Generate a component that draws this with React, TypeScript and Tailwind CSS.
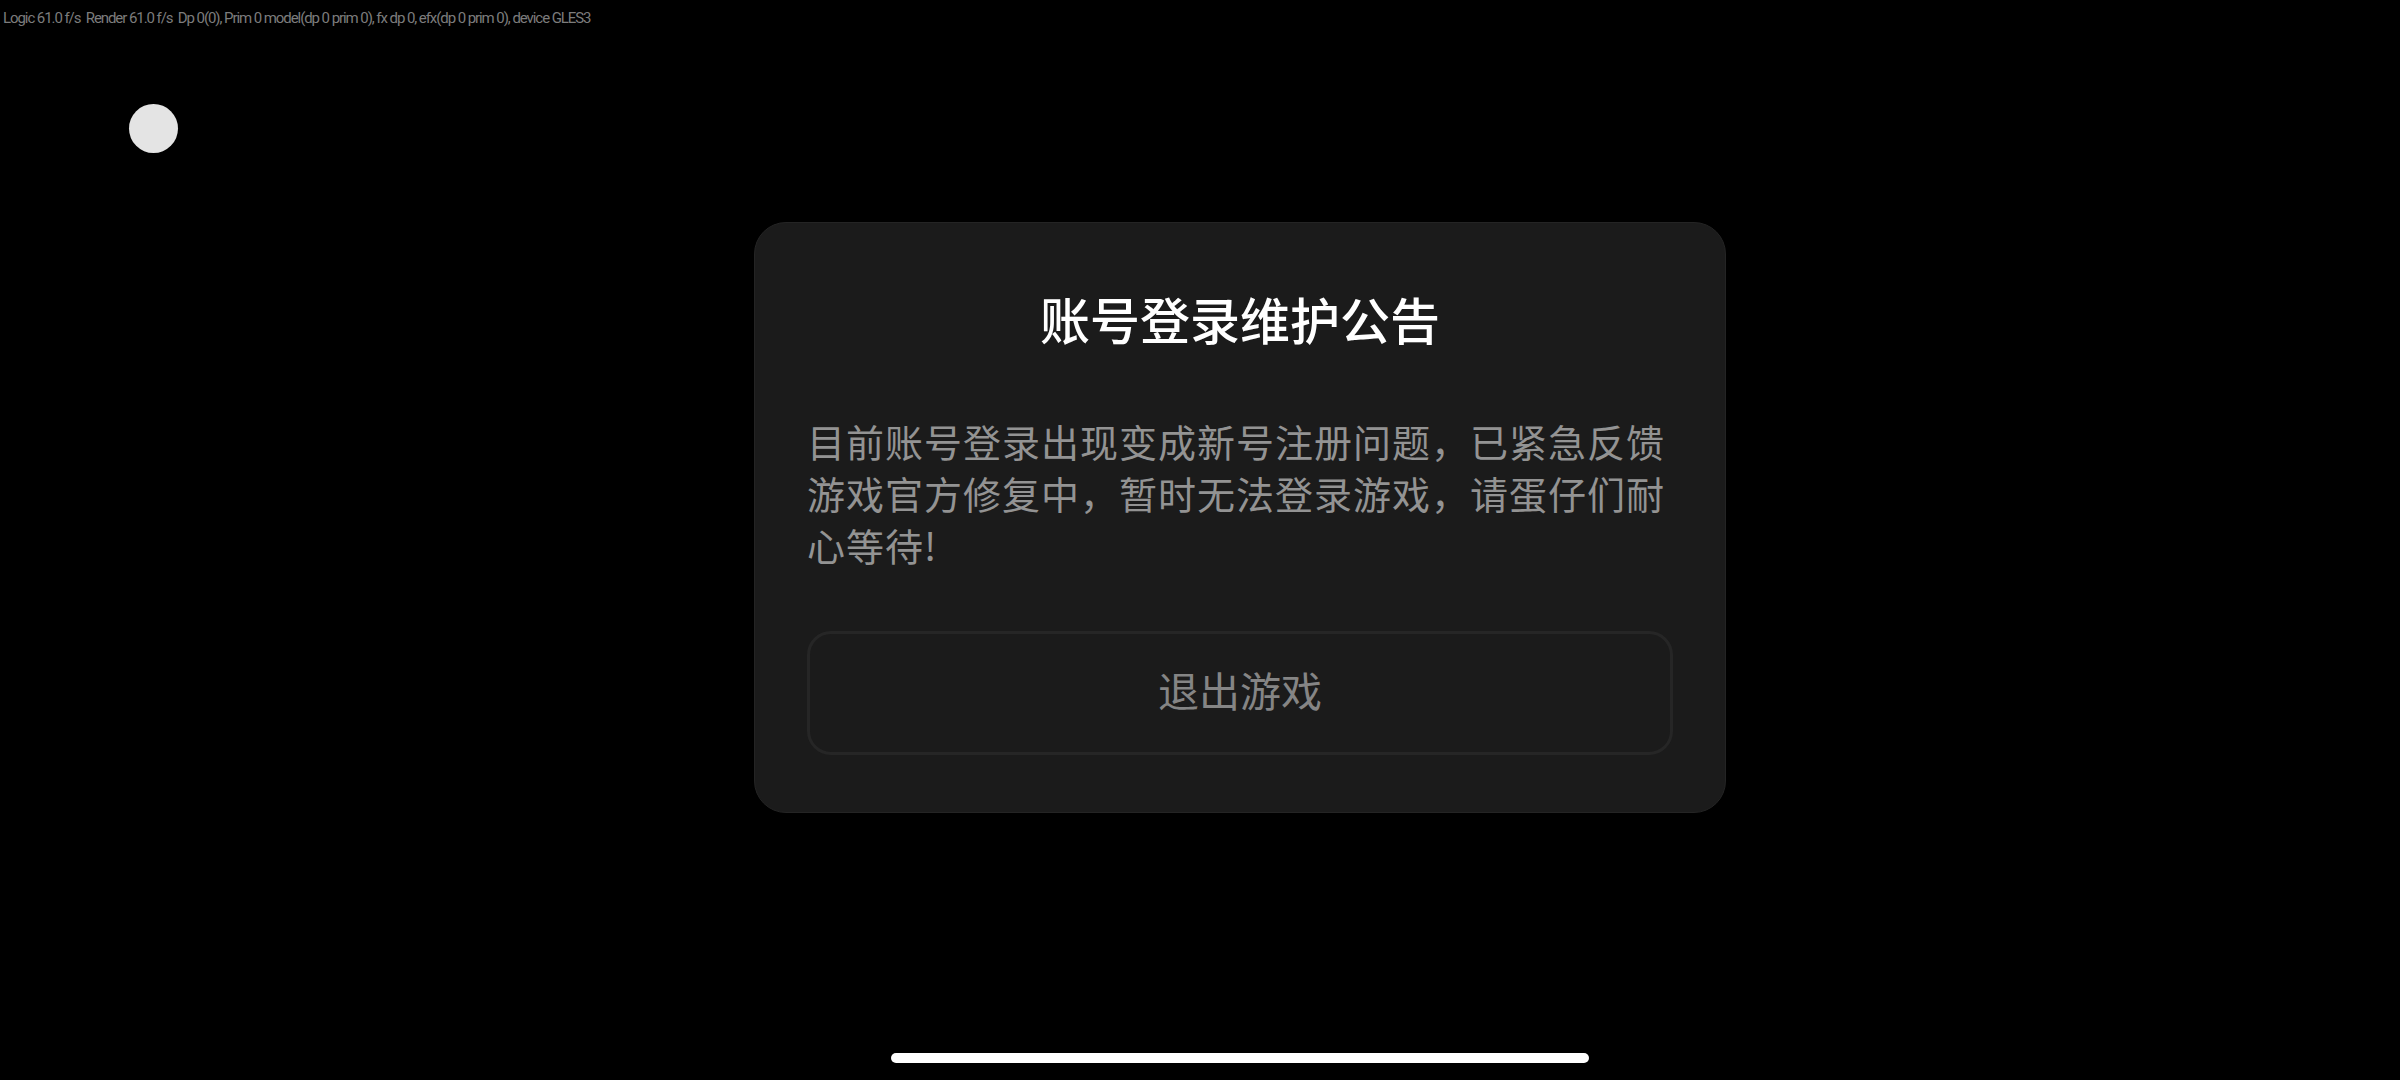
export default function App() {
  return (
    <div className="relative flex h-[1080px] w-[2400px] flex-col overflow-hidden bg-black font-['Noto_Sans_CJK_SC',sans-serif]">
      <div className="h-[36px] pl-[3px] pt-[8px] font-['Roboto',sans-serif] text-[15px] leading-[20px] tracking-[-1.07px] text-[#7c7c7c] whitespace-pre">
        {"Logic 61.0 f/s  Render 61.0 f/s  Dp 0(0), Prim 0 model(dp 0 prim 0), fx dp 0, efx(dp 0 prim 0), device GLES3"}
      </div>
      <div className="absolute left-[129px] top-[104px] h-[49px] w-[49px] rounded-full bg-[#e4e4e4]" />
      <div className="ml-[754px] mt-[186px] flex h-[591px] w-[972px] flex-col rounded-[32px] border border-[#242424] bg-[#1b1b1b] px-[52px] pt-[63px]">
        <h1 className="text-center text-[50px] font-medium leading-[64px] text-white">账号登录维护公告</h1>
        <p className="mt-[65px] w-[866px] text-[38px] leading-[52px] tracking-[1px] text-[#939393]">
          目前账号登录出现变成新号注册问题，已紧急反馈游戏官方修复中，暂时无法登录游戏，请蛋仔们耐心等待!
        </p>
        <button className="mt-[60px] flex h-[124px] w-[866px] items-center justify-center rounded-[24px] border-[3px] border-[#262626] pb-[7px] text-[41px] text-[#858585]">
          退出游戏
        </button>
      </div>
      <div className="ml-[891px] mt-[240px] h-[10px] w-[698px] rounded-full bg-white" />
    </div>
  );
}
